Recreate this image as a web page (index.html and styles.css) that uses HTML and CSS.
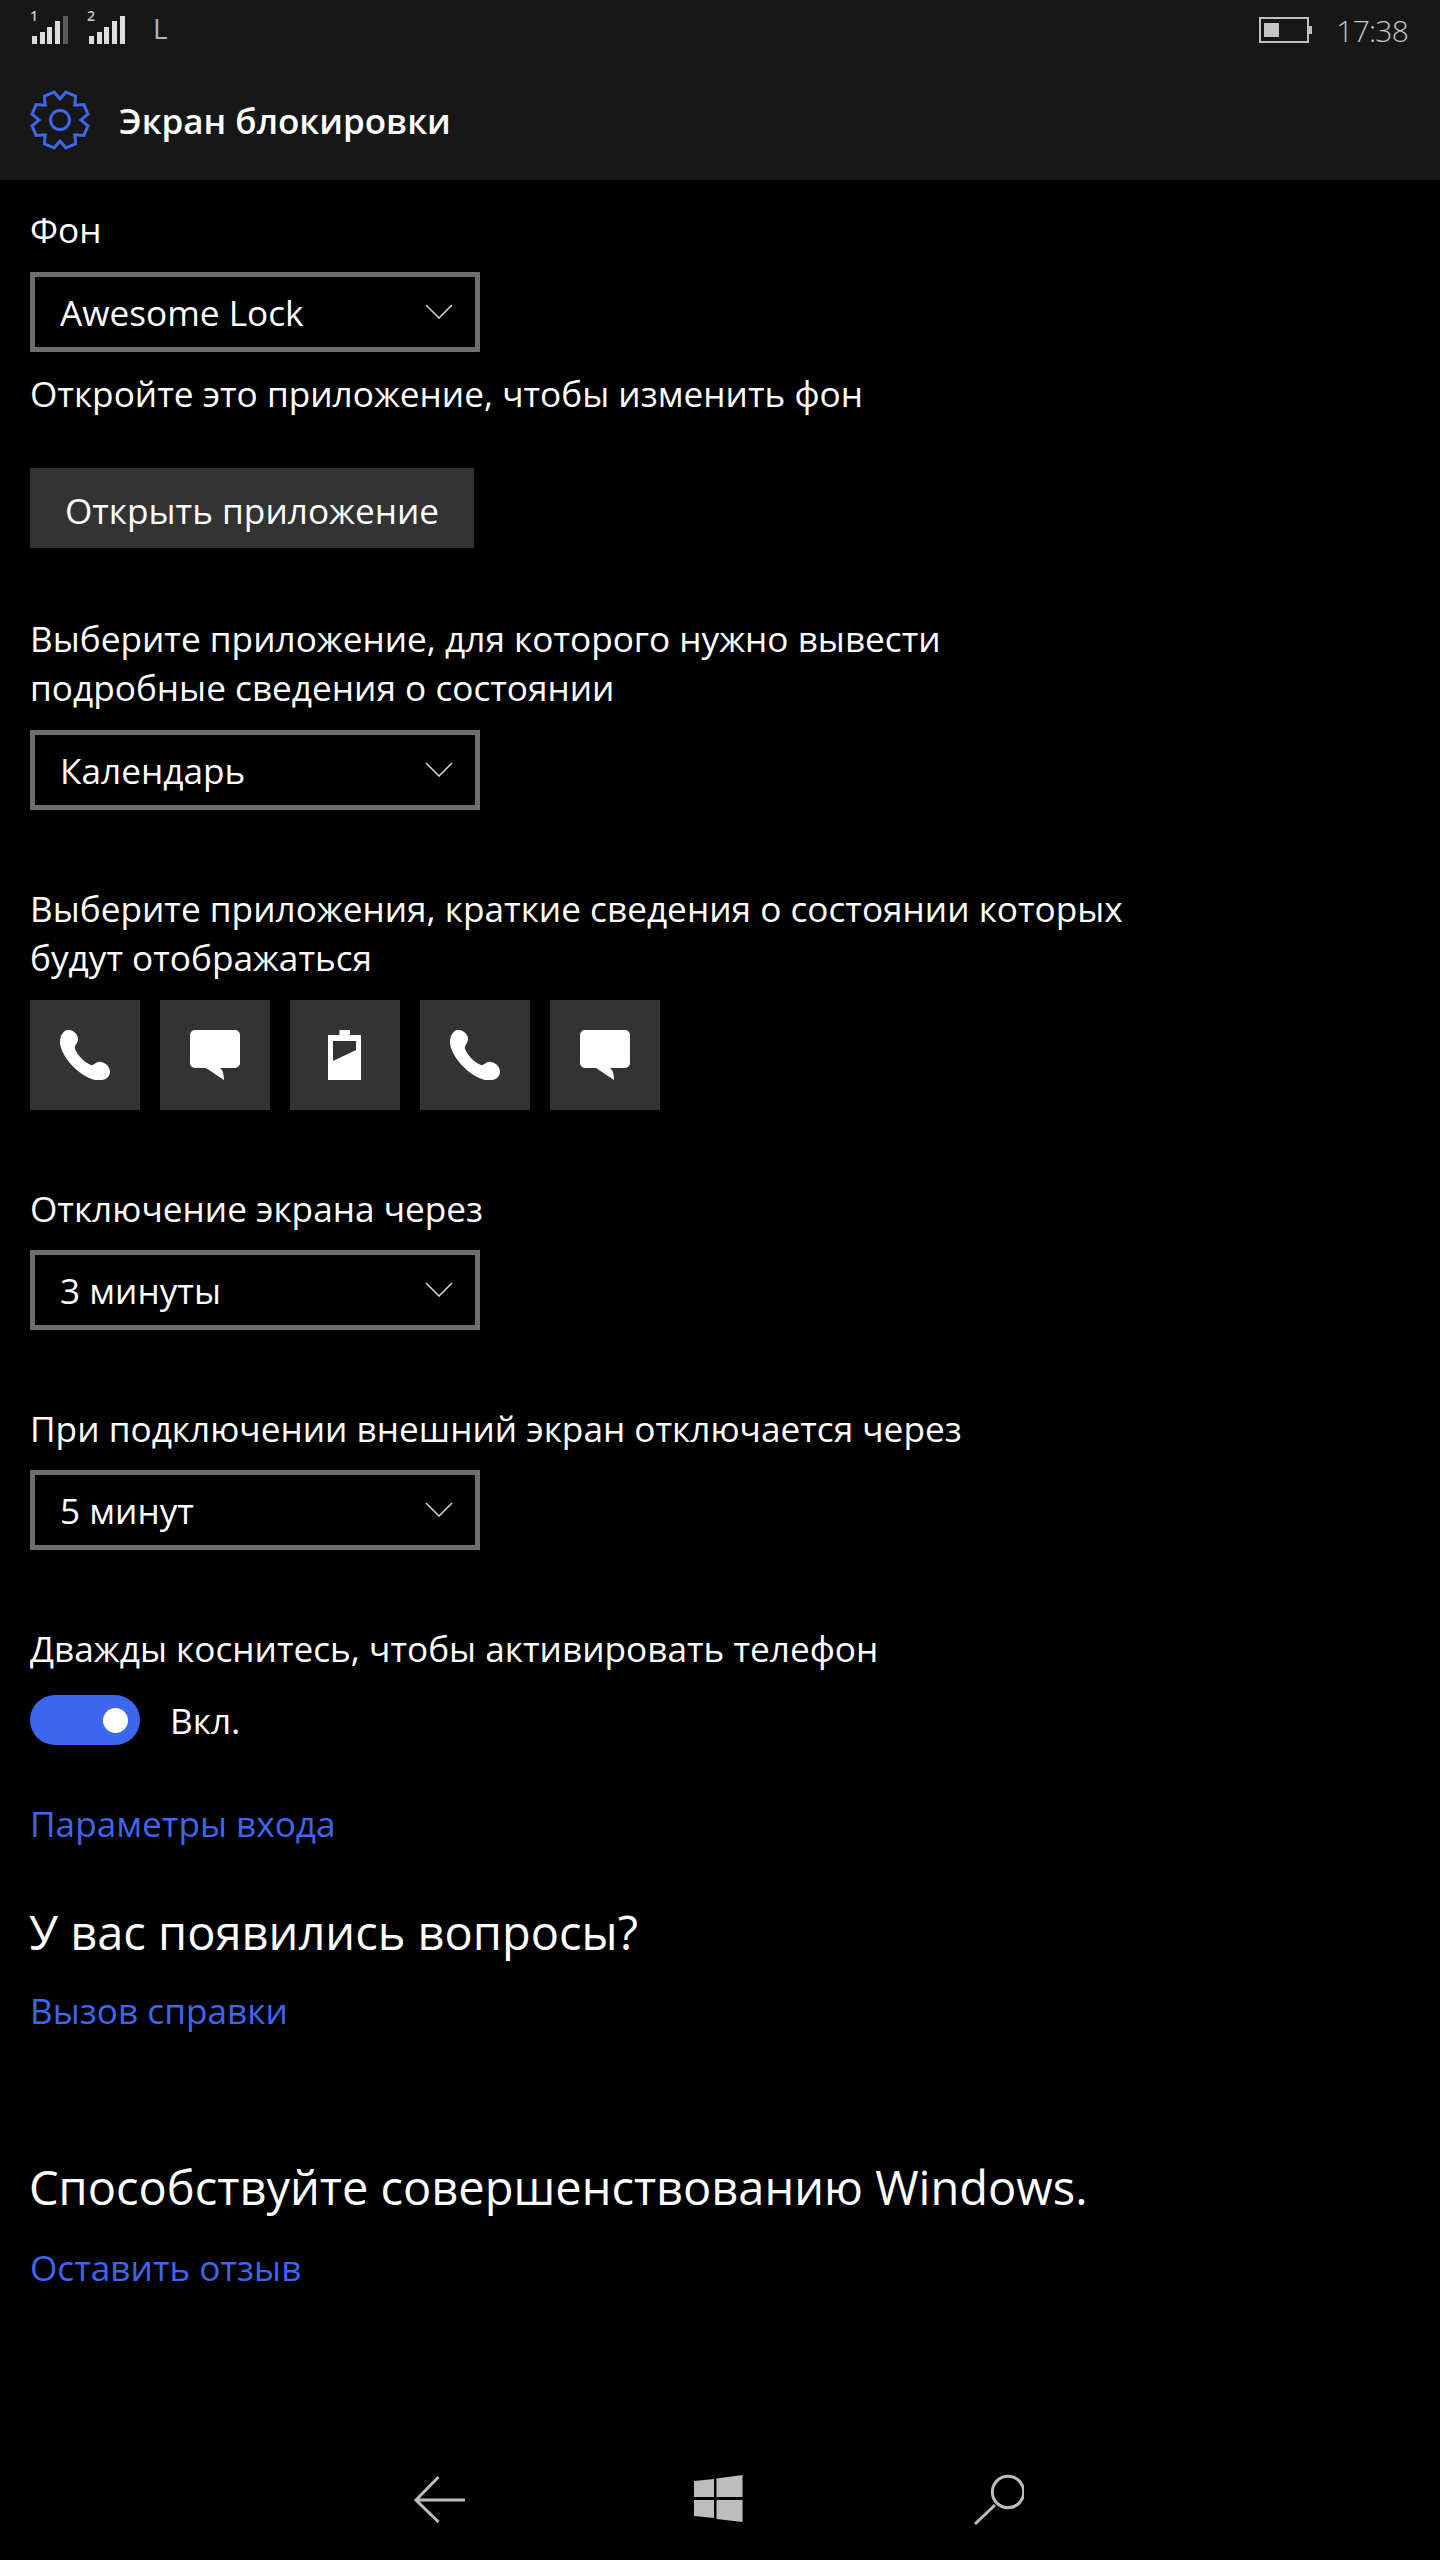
FILE: index.html
```html
<!DOCTYPE html>
<html lang="ru">
<head>
    <meta charset="UTF-8">
    <meta name="viewport" content="width=device-width, initial-scale=1.0">
    <title>Экран блокировки</title>
    <link rel="stylesheet" href="styles.css">
</head>
<body>
    <svg class="defs" width="0" height="0">
        <defs>
            <path id="phone" d="M7 0C11 -1 18 3 18 9C18 14 14 15 15 19C18 26 24 32 31 35C34 36 36 31 41 32C47 33 50 38 50 42C50 46 46 50 42 50L35 50C18 46 0 25 0 12C0 6 3 1 7 0Z"/>
            <path id="bubble" d="M5 0H45A5 5 0 0 1 50 5V33A5 5 0 0 1 45 38H30C33 40 34 45 34 50L16 38H5A5 5 0 0 1 0 33V5A5 5 0 0 1 5 0Z"/>
            <path id="chevron" d="M1 1L14 14L27 1"/>
        </defs>
    </svg>

    <div class="statusbar">
        <div class="status-left">
            <svg class="signal" width="40" height="50" viewBox="0 0 40 50">
                <text x="0" y="21" class="sim">1</text>
                <rect x="2" y="36" width="5" height="8"/>
                <rect x="10" y="32" width="5" height="12"/>
                <rect x="17" y="27" width="5" height="17"/>
                <rect x="25" y="21" width="5" height="23"/>
                <rect x="33" y="16" width="5" height="28" class="bar-dim"/>
            </svg>
            <svg class="signal" width="40" height="50" viewBox="0 0 40 50">
                <text x="0" y="21" class="sim">2</text>
                <rect x="2" y="36" width="5" height="8"/>
                <rect x="10" y="32" width="5" height="12"/>
                <rect x="17" y="27" width="5" height="17"/>
                <rect x="25" y="21" width="5" height="23"/>
                <rect x="33" y="16" width="5" height="28"/>
            </svg>
            <span class="lang">L</span>
        </div>
        <div class="status-right">
            <div class="battery"><div class="battery-fill"></div></div>
            <span class="time">17:38</span>
        </div>
    </div>

    <div class="titlebar">
        <svg class="gear" width="60" height="60" viewBox="0 0 60 60">
            <path d="M30 9L35.93 2.12L45.52 6.1L44.85 15.15L53.9 14.48L57.88 24.07L51 30L57.88 35.93L53.9 45.52L44.85 44.85L45.52 53.9L35.93 57.88L30 51L24.07 57.88L14.48 53.9L15.15 44.85L6.1 45.52L2.12 35.93L9 30L2.12 24.07L6.1 14.48L15.15 15.15L14.48 6.1L24.07 2.12Z"/>
            <circle cx="30" cy="30" r="9.5"/>
        </svg>
        <span class="title">Экран блокировки</span>
    </div>

    <div class="content">
        <div class="label label-first">Фон</div>
        <div class="select">
            <span>Awesome Lock</span>
            <svg class="chevron" width="28" height="15" viewBox="0 0 28 15"><use href="#chevron"/></svg>
        </div>
        <div class="label label-hint">Откройте это приложение, чтобы изменить фон</div>
        <div class="button">Открыть приложение</div>

        <div class="label label-group label-after-button">Выберите приложение, для которого нужно вывести<br>подробные сведения о состоянии</div>
        <div class="select">
            <span>Календарь</span>
            <svg class="chevron" width="28" height="15" viewBox="0 0 28 15"><use href="#chevron"/></svg>
        </div>

        <div class="label label-group">Выберите приложения, краткие сведения о состоянии которых<br>будут отображаться</div>
        <div class="tiles">
            <div class="tile"><svg width="50" height="50" viewBox="0 0 50 50"><use href="#phone"/></svg></div>
            <div class="tile"><svg width="50" height="50" viewBox="0 0 50 50"><use href="#bubble"/></svg></div>
            <div class="tile">
                <svg width="50" height="50" viewBox="0 0 50 50"><path fill-rule="evenodd" d="M19.5 0H30V5H41V50H8V5H19.5ZM13 11V31L36 20V11Z"/></svg>
            </div>
            <div class="tile"><svg width="50" height="50" viewBox="0 0 50 50"><use href="#phone"/></svg></div>
            <div class="tile"><svg width="50" height="50" viewBox="0 0 50 50"><use href="#bubble"/></svg></div>
        </div>

        <div class="label label-group label-tight">Отключение экрана через</div>
        <div class="select">
            <span>3 минуты</span>
            <svg class="chevron" width="28" height="15" viewBox="0 0 28 15"><use href="#chevron"/></svg>
        </div>

        <div class="label label-group label-tight">При подключении внешний экран отключается через</div>
        <div class="select">
            <span>5 минут</span>
            <svg class="chevron" width="28" height="15" viewBox="0 0 28 15"><use href="#chevron"/></svg>
        </div>

        <div class="label label-group">Дважды коснитесь, чтобы активировать телефон</div>
        <div class="toggle-row">
            <div class="toggle"><div class="knob"></div></div>
            <span>Вкл.</span>
        </div>

        <a class="link link-first" href="#">Параметры входа</a>

        <div class="heading heading-help">У вас появились вопросы?</div>
        <a class="link" href="#">Вызов справки</a>

        <div class="heading heading-feedback">Способствуйте совершенствованию Windows.</div>
        <a class="link" href="#">Оставить отзыв</a>
    </div>

    <div class="navbar">
        <svg width="52" height="48" viewBox="0 0 52 48" class="nav-line">
            <path d="M24.5 1L2 24L24.5 46M2 24H51"/>
        </svg>
        <svg width="50" height="50" viewBox="0 0 50 50" class="nav-win">
            <path d="M0 6L20 4V22H0ZM22.5 3.5L48.5 0V22H22.5ZM0 25H20V43L0 41ZM22.5 25H48.5V47L22.5 44Z"/>
        </svg>
        <svg width="52" height="52" viewBox="0 0 52 52" class="nav-line">
            <circle cx="36" cy="18" r="15.7"/>
            <path d="M23 31L3 50"/>
        </svg>
    </div>
</body>
</html>
```

FILE: styles.css
```css
body {
    margin: 0;
    width: 1440px;
    height: 2560px;
    background-color: #000;
    color: #fff;
    font-family: "Open Sans", "Noto Sans", sans-serif;
    font-size: 35.2px;
    display: flex;
    flex-direction: column;
    overflow: hidden;
}

.defs {
    position: absolute;
}

.statusbar {
    height: 60px;
    padding: 0 32px 0 30px;
    background-color: #171717;
    display: flex;
    justify-content: space-between;
    box-sizing: border-box;
}

.status-left {
    display: flex;
    align-items: flex-start;
    gap: 17px;
}

.signal rect {
    fill: #dedede;
}

.signal .bar-dim {
    fill: #5a5a5a;
}

.sim {
    fill: #c8c8c8;
    font-size: 14px;
    font-weight: 600;
}

.lang {
    margin-left: 9px;
    margin-top: 9px;
    font-size: 28px;
    line-height: 38px;
    color: #b4b4b4;
}

.status-right {
    display: flex;
    align-items: center;
    gap: 27px;
}

.battery {
    width: 50px;
    height: 26px;
    box-sizing: border-box;
    border: 2px solid #bfbfbf;
    padding: 4px 3px;
    display: flex;
    position: relative;
}

.battery::after {
    content: "";
    position: absolute;
    right: -5px;
    top: 7px;
    width: 3px;
    height: 8px;
    background-color: #bfbfbf;
}

.battery-fill {
    width: 15px;
    background-color: #c4c4c4;
}

.time {
    font-size: 30px;
    font-weight: 300;
    letter-spacing: -0.8px;
    color: #c4c4c4;
}

.titlebar {
    height: 120px;
    padding-left: 30px;
    background-color: #171717;
    display: flex;
    align-items: center;
    gap: 29px;
}

.gear {
    fill: none;
    stroke: #3d67ee;
    stroke-width: 3;
}

.title {
    font-size: 35px;
    font-weight: 600;
}

.content {
    flex: 1;
    padding: 0 30px;
    display: flex;
    flex-direction: column;
    align-items: flex-start;
}

.label {
    line-height: 49px;
    margin-bottom: 18px;
}

.label-first {
    margin-top: 25px;
}

.label-hint {
    margin-top: 17px;
    margin-bottom: 0;
}

.label-group {
    margin-top: 74px;
}

.label-tight {
    margin-bottom: 17px;
}

.label-after-button {
    margin-top: 66px;
}

.select {
    width: 450px;
    height: 80px;
    box-sizing: border-box;
    border: 5px solid #6e6e6e;
    padding: 2px 22px 0 25px;
    display: flex;
    align-items: center;
    justify-content: space-between;
}

.select span {
    margin-top: -2px;
}

.chevron {
    fill: none;
    stroke: #d0d0d0;
    stroke-width: 1.6;
    margin-top: -4px;
}

.button {
    width: 444px;
    height: 80px;
    box-sizing: border-box;
    padding-top: 3px;
    margin-top: 50px;
    background-color: #333;
    display: flex;
    align-items: center;
    justify-content: center;
}

.tiles {
    display: flex;
    gap: 20px;
}

.tile {
    width: 110px;
    height: 110px;
    background-color: #333;
    display: flex;
    align-items: center;
    justify-content: center;
    fill: #fff;
}

.toggle-row {
    display: flex;
    align-items: center;
    gap: 30px;
    margin-top: 4px;
}

.toggle {
    width: 110px;
    height: 50px;
    box-sizing: border-box;
    padding-right: 12px;
    border-radius: 25px;
    background-color: #3d67ee;
    display: flex;
    align-items: center;
    justify-content: flex-end;
}

.knob {
    width: 25px;
    height: 25px;
    border-radius: 50%;
    background-color: #fff;
}

.link {
    color: #3d67ee;
    text-decoration: none;
    line-height: 49px;
}

.link-first {
    margin-top: 54px;
}

.heading {
    font-size: 47px;
    line-height: 64px;
    margin-left: -1px;
}

.heading-help {
    margin-top: 52px;
    margin-bottom: 22px;
}

.heading-feedback {
    margin-top: 120px;
    margin-bottom: 24px;
}

.navbar {
    height: 120px;
    display: flex;
    align-items: center;
    padding-left: 414px;
    gap: 228px;
}

.nav-line {
    fill: none;
    stroke: #bdbdbd;
    stroke-width: 3;
}

.nav-win {
    fill: #bdbdbd;
}
```
